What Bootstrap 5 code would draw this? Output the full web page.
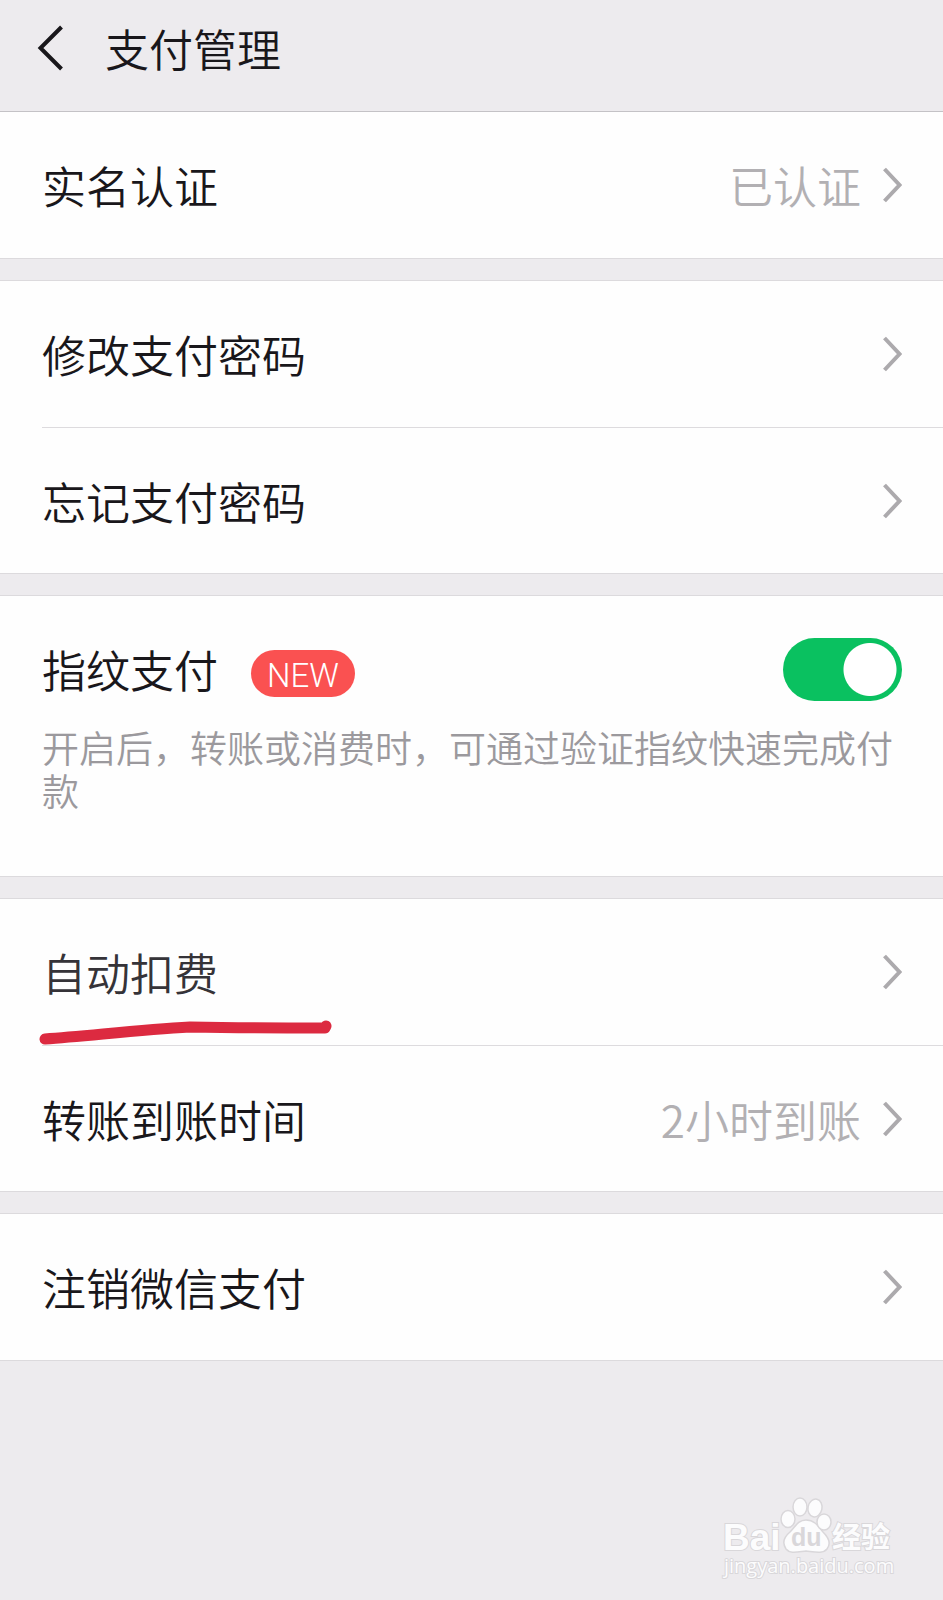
<!DOCTYPE html>
<html lang="zh-CN">
<head>
<meta charset="utf-8">
<meta name="viewport" content="width=device-width, initial-scale=1">
<title>支付管理</title>
<link href="https://cdn.jsdelivr.net/npm/bootstrap@5.3.0/dist/css/bootstrap.min.css" rel="stylesheet">
<style>
  body { background: #edebee; color: #19171b; font-family: "Noto Sans CJK SC", sans-serif; font-weight: 350; font-size: 44px; line-height: 64px; }
  .topbar { padding: 16px 40px 31px 36px; border-bottom: 1px solid #c4c2c6; gap: 41px; }
  .topbar h1 { font-size: 44px; line-height: 64px; font-weight: 350; }
  .back-btn { padding: 8px 0; line-height: 0; color: inherit; border: 0; background: none; }
  .group { background: #fefefe; padding-left: 42px; border-bottom: 1px solid #dcdadd; }
  .group + .group { margin-top: 21px; border-top: 1px solid #dcdadd; }
  .entry { min-height: 146px; padding: 0 41px 0 0; color: inherit; text-decoration: none; gap: 21px; }
  .entry + .entry { border-top: 1px solid #dddbde; }
  .entry .arrow { margin-left: auto; }
  .entry-value { margin-left: auto; color: #b2b0b3; }
  .entry-value + .arrow { margin-left: 0; }
  .pressed { color: #353338; }
  .arrow { flex: none; }
  .finger { padding: 41px 41px 64px 0; }
  .new-tag { font-family: Roboto, sans-serif; font-size: 33px; line-height: 43px; font-weight: 300; background: #fa5151; padding: 4px 16px 0; margin: 8px 0 0 33px; }
  .hint { font-size: 37px; line-height: 43px; color: #9b999d; margin-top: 25px; }
  .form-check-input.pay-switch { width: 119px; height: 63px; margin: 0 0 0 auto; border: 0; border-radius: 32px; background: #c9c9c9 radial-gradient(circle at 32px 50%, #fff 26px, transparent 27px); }
  .form-check-input.pay-switch:checked { background: #0ac160 radial-gradient(circle at 87px 50%, #fff 26px, transparent 27px); }
  .underline-mark { left: -4px; bottom: 0; }
  .site-mark { padding: 129px 42px 4px 0; }
  .site-mark text { fill: #fcfcfd; stroke: #d9d7da; stroke-width: 2px; paint-order: stroke; }
</style>
</head>
<body>
<header class="topbar d-flex align-items-center">
  <button type="button" class="back-btn" aria-label="返回">
    <svg width="28" height="48" viewBox="0 0 28 48" fill="none" stroke="currentColor" stroke-width="4"><path d="M25.500 3 4.500 24 25.500 45"/></svg>
  </button>
  <h1 class="m-0">支付管理</h1>
</header>

<main>
  <section class="group">
    <a href="#" class="entry d-flex align-items-center">
      <span>实名认证</span><span class="entry-value">已认证</span>
      <svg class="arrow" width="20" height="36" viewBox="0 0 20 36" fill="none" stroke="#acaaad" stroke-width="4"><path d="M2.500 2 17.500 18 2.500 34"/></svg>
    </a>
  </section>

  <section class="group">
    <a href="#" class="entry d-flex align-items-center">
      <span>修改支付密码</span>
      <svg class="arrow" width="20" height="36" viewBox="0 0 20 36" fill="none" stroke="#acaaad" stroke-width="4"><path d="M2.500 2 17.500 18 2.500 34"/></svg>
    </a>
    <a href="#" class="entry d-flex align-items-center">
      <span>忘记支付密码</span>
      <svg class="arrow" width="20" height="36" viewBox="0 0 20 36" fill="none" stroke="#acaaad" stroke-width="4"><path d="M2.500 2 17.500 18 2.500 34"/></svg>
    </a>
  </section>

  <section class="group">
    <div class="finger">
      <div class="d-flex align-items-center">
        <label for="fingerPay">指纹支付</label>
        <span class="new-tag rounded-pill text-white">NEW</span>
        <input class="form-check-input pay-switch" type="checkbox" role="switch" id="fingerPay" checked>
      </div>
      <p class="hint mb-0">开启后，转账或消费时，可通过验证指纹快速完成付款</p>
    </div>
  </section>

  <section class="group">
    <a href="#" class="entry pressed d-flex align-items-center position-relative">
      <span>自动扣费</span>
      <svg class="arrow" width="20" height="36" viewBox="0 0 20 36" fill="none" stroke="#acaaad" stroke-width="4"><path d="M2.500 2 17.500 18 2.500 34"/></svg>
      <svg class="underline-mark position-absolute" width="296" height="26" viewBox="0 0 296 26" fill="none" stroke="#dc2a40" stroke-width="11" stroke-linecap="round" stroke-linejoin="round" aria-hidden="true"><path d="M7 20C50 17 100 11 152 8Q210 9 287 9L288 7"/></svg>
    </a>
    <a href="#" class="entry d-flex align-items-center">
      <span>转账到账时间</span><span class="entry-value">2小时到账</span>
      <svg class="arrow" width="20" height="36" viewBox="0 0 20 36" fill="none" stroke="#acaaad" stroke-width="4"><path d="M2.500 2 17.500 18 2.500 34"/></svg>
    </a>
  </section>

  <section class="group">
    <a href="#" class="entry d-flex align-items-center">
      <span>注销微信支付</span>
      <svg class="arrow" width="20" height="36" viewBox="0 0 20 36" fill="none" stroke="#acaaad" stroke-width="4"><path d="M2.500 2 17.500 18 2.500 34"/></svg>
    </a>
  </section>
</main>

<footer class="site-mark d-flex justify-content-end">
  <svg width="180" height="90" viewBox="0 0 180 90">
    <text x="2" y="60" font-family="Liberation Sans, sans-serif" font-weight="700" font-size="37">Bai</text>
    <g fill="#fcfcfd" stroke="#d9d7da" stroke-width="1.500">
      <path d="M85 30C94 30 98 37 102 42C108 48 110 54 106 59C102 64 94 62 85 61C76 62 69 64 65 59C61 53 63 47 69 42C74 37 77 30 85 30Z"/>
      <ellipse cx="67" cy="29" rx="7" ry="8.500"/>
      <ellipse cx="79" cy="17" rx="7" ry="9"/>
      <ellipse cx="94" cy="18" rx="7" ry="9" transform="rotate(12 94 18)"/>
      <ellipse cx="103" cy="32" rx="7" ry="8"/>
    </g>
    <text x="70" y="56" font-family="Liberation Sans, sans-serif" font-weight="700" font-size="25" style="fill:#d9d7da;stroke:none">du</text>
    <text x="111" y="58" font-family="Noto Sans CJK SC, sans-serif" font-weight="700" font-size="29">经验</text>
    <text x="3" y="83" font-family="Open Sans, sans-serif" font-weight="400" font-size="20">jingyan.baidu.com</text>
  </svg>
</footer>
<script src="https://cdn.jsdelivr.net/npm/bootstrap@5.3.0/dist/js/bootstrap.bundle.min.js"></script>
</body>
</html>
